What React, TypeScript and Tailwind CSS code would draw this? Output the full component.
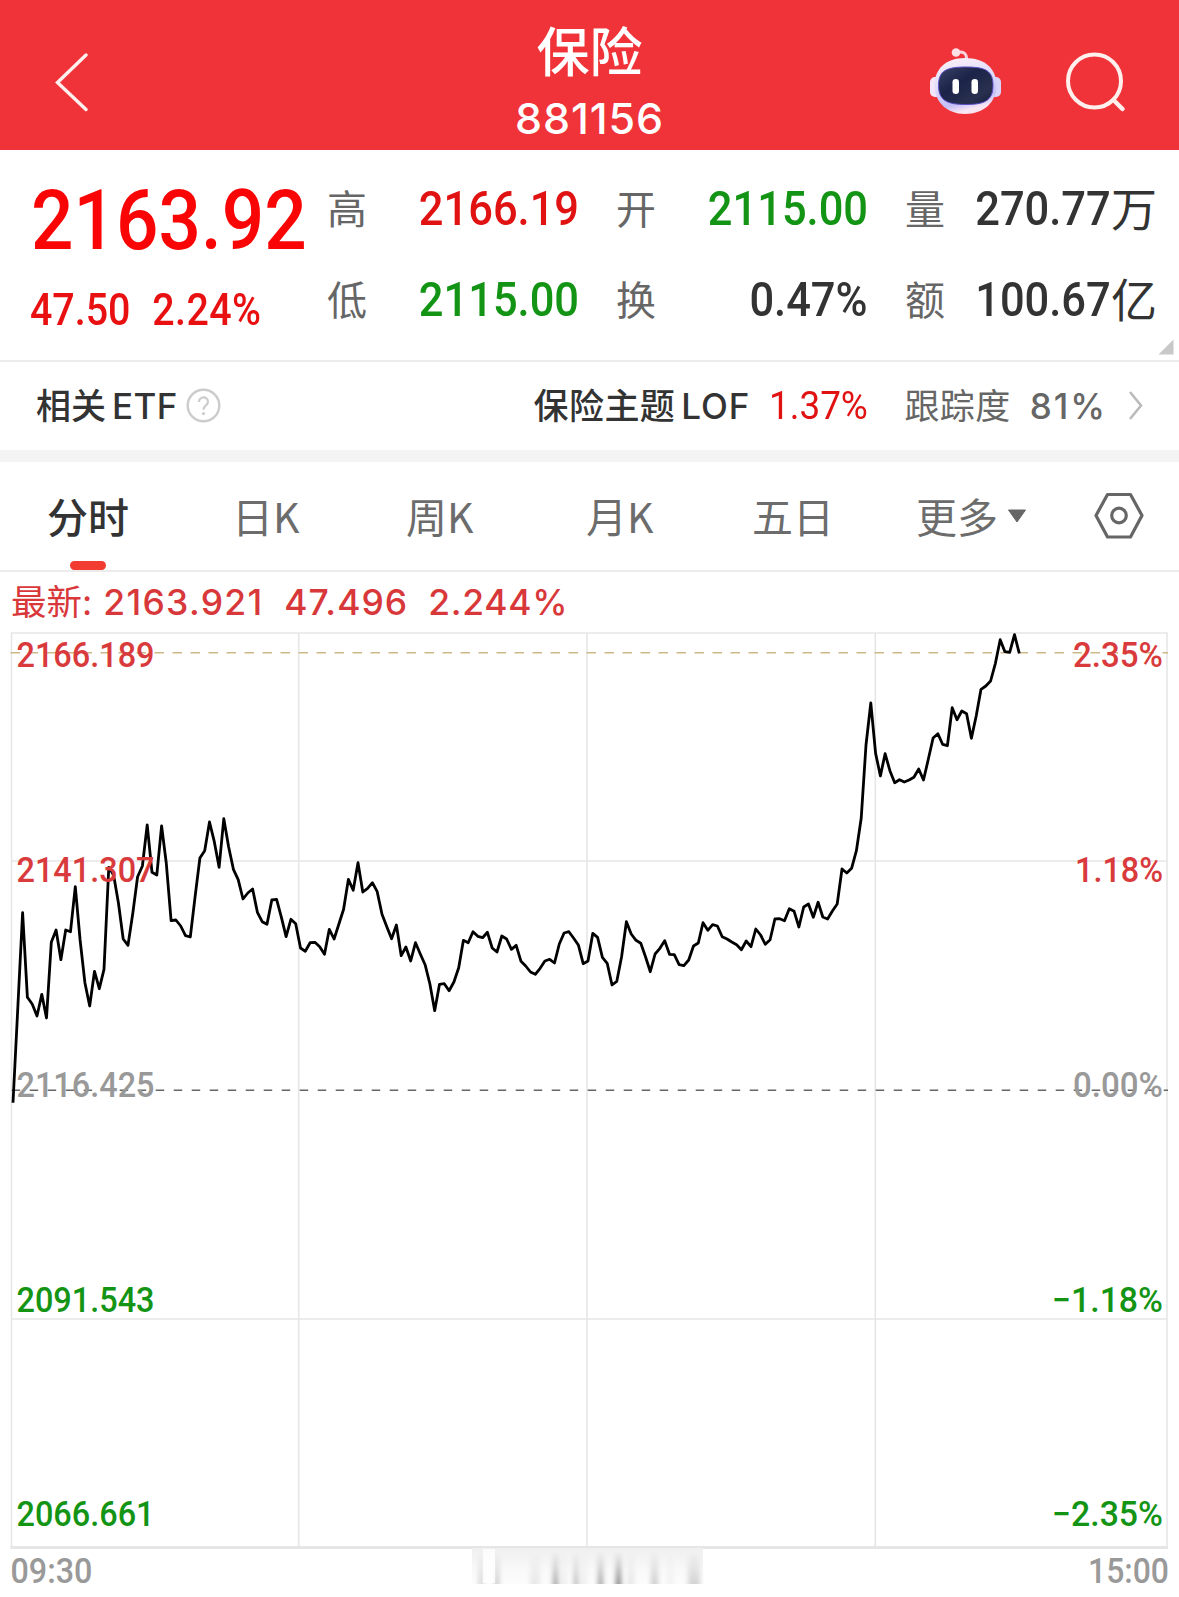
import clsx from "clsx";

const CJK = "font-['Inter','Noto_Sans_CJK_SC',sans-serif]";
const NUM = "font-['Roboto','Noto_Sans_CJK_SC',sans-serif]";

const stats = [
  { label: "高", value: "2166.19", color: "text-[#e01212]" },
  { label: "开", value: "2115.00", color: "text-[#149414]" },
  { label: "量", value: "270.77", unit: "万", color: "text-[#333]" },
  { label: "低", value: "2115.00", color: "text-[#149414]" },
  { label: "换", value: "0.47%", color: "text-[#333]" },
  { label: "额", value: "100.67", unit: "亿", color: "text-[#333]" },
];

const tabs = [
  { name: "分时", width: "w-[177px] pl-[47px]" },
  { name: "日K", width: "w-[175px] pl-[55px]" },
  { name: "周K", width: "w-[176px] pl-[54px]" },
  { name: "月K", width: "w-[176px] pl-[58px]" },
  { name: "五日", width: "w-[174px] pl-[48px]" },
];

// 分时线，每分钟一个点
const prices = [
  1102.7, 1008, 912.7, 997.3, 1004, 1016, 994.3, 1018, 942.3, 930, 959.7, 930,
  931.7, 886.7, 940, 982.7, 1006, 971.3, 988.7, 969.3, 867.3, 875, 902.7, 939,
  945.3, 913.3, 876.7, 866, 825, 872.3, 875, 826, 863.3, 920.7, 920, 926,
  935.7, 937, 896.7, 858, 850.7, 822, 841.7, 867.3, 818.7, 846.7, 869.3, 879.7,
  899, 893, 889, 912.3, 921.7, 924.3, 900, 899.3, 917.3, 936.7, 919.3, 923.7,
  948, 951.3, 942.7, 942.3, 946.7, 954.3, 929.3, 939, 924, 909.3, 879.3, 890.3,
  862.7, 892, 888.3, 882.7, 891.7, 914.3, 926.7, 938.7, 925, 955.7, 947, 961,
  942.7, 954, 964.7, 984, 1010.7, 984.3, 983.7, 990.7, 982, 967.7, 940.3, 942.7,
  931.7, 936.3, 937.7, 932.3, 948, 952, 936, 939, 949.3, 945.3, 961.3, 966,
  972, 974.3, 968.3, 961, 959.3, 963, 944, 933, 931.7, 938.3, 945.3, 963.7,
  961, 933.3, 937.3, 957.3, 963.3, 985, 981.3, 956.7, 921.7, 934, 940.3, 943.3,
  956.7, 971.7, 954, 948.3, 940.7, 954.3, 954.7, 964.7, 965.7, 960, 946, 943,
  922.7, 930.3, 924.7, 926, 936.7, 939, 942, 944.7, 949.7, 941, 946.7, 929,
  935, 944.3, 939.7, 919, 918.7, 920.7, 908.7, 911.3, 927, 907, 904, 917.3,
  902.3, 917, 919, 911, 904, 869, 873, 868.3, 850.7, 818.3, 745, 703,
  753.3, 776, 753.7, 770.7, 782.7, 779.7, 782, 780, 777.3, 769, 780, 759.3,
  738, 733.7, 744.3, 745.7, 707.7, 719.7, 711, 713.7, 738.3, 716, 689.3, 686,
  681, 663.3, 639.7, 651.7, 652.3, 634.7, 653.3,
];

const axis = [
  { y: 666.5, left: "2166.189", right: "2.35%", rw: 90, fill: "#d93a3c" },
  { y: 881.5, left: "2141.307", right: "1.18%", rw: 88, fill: "#d93a3c" },
  { y: 1096.5, left: "2116.425", right: "0.00%", rw: 90, fill: "#999" },
  { y: 1311.5, left: "2091.543", right: "−1.18%", rw: 111, fill: "#149414" },
  { y: 1526, left: "2066.661", right: "−2.35%", rw: 111, fill: "#149414" },
];

// 底部残影的竖条: x, 宽, 深浅
const smears = [
  [479, 4, 0.25], [495, 4, 0.32], [530, 10, 0.1], [553, 5, 0.5],
  [562, 4, 0.1], [574, 4, 0.4], [582, 4, 0.1], [598, 5, 0.5],
  [616, 5, 0.7], [628, 6, 0.12], [651, 7, 0.25], [668, 5, 0.06],
  [688, 12, 0.22],
];

function Robot() {
  return (
    <svg width="74" height="68" viewBox="0 0 74 68">
      <defs>
        <linearGradient id="shell" x1="0" y1="0" x2="0.3" y2="1">
          <stop offset="0" stopColor="#fff4f8" />
          <stop offset="0.55" stopColor="#dcd8fb" />
          <stop offset="0.85" stopColor="#c3bdf8" />
          <stop offset="1" stopColor="#f8e6f2" />
        </linearGradient>
        <linearGradient id="visor" x1="0" y1="0" x2="1" y2="1">
          <stop offset="0" stopColor="#3a4166" />
          <stop offset="0.4" stopColor="#1b2448" />
          <stop offset="0.75" stopColor="#29304f" />
          <stop offset="1" stopColor="#161c3c" />
        </linearGradient>
      </defs>
      <path d="M27 5.5C34 4 38 6 37.5 13" fill="none" stroke="#fbd3dc" strokeWidth="3" />
      <circle cx="27" cy="5.5" r="4.3" fill="#fde0e6" />
      <rect x="1" y="30" width="12" height="20" rx="5" fill="#f3e6fa" />
      <rect x="60" y="30" width="12" height="20" rx="5" fill="#d9d3fa" />
      <path d="M36 11C56 11 67.5 22 67.5 38C67.5 55 55 67 36 67C18 67 5.5 55 5.5 38C5.5 22 17 11 36 11Z" fill="url(#shell)" />
      <path d="M37 20C57 20 64 24 64 38.5C64 54 55 57.5 37 57.5C19 57.5 9.5 54 9.5 38.5C9.5 24 17 20 37 20Z" fill="url(#visor)" stroke="#5a4fc4" strokeWidth="1" />
      <rect x="23.5" y="32" width="6.5" height="15" rx="3.2" fill="#fff" />
      <rect x="42.5" y="32" width="6.5" height="15" rx="3.2" fill="#fff" />
    </svg>
  );
}

function Header() {
  return (
    <header className="flex h-[150px] items-start justify-between bg-[#f03239] text-white">
      <div className="w-[400px] pt-[53px] pl-[55px]">
        <svg width="36" height="60" viewBox="0 0 36 60" fill="none" stroke="#fff0ee" strokeWidth="3.4">
          <path d="M31 2L2.5 29.5L31 56.5" strokeLinecap="round" />
        </svg>
      </div>
      <div className="flex flex-col items-center">
        <div className="mt-[23px] text-[53px] leading-[60px] font-medium">保险</div>
        <div className="mt-[8px] text-[43px] leading-[54px] font-medium tracking-[0.9px]">881156</div>
      </div>
      <div className="flex w-[400px] justify-end gap-[61px] pr-[53px]">
        <div className="pt-[47px]">
          <Robot />
        </div>
        <svg className="mt-[51px]" width="62" height="64" viewBox="0 0 62 64" fill="none" stroke="#fff0ee" strokeWidth="4">
          <circle cx="30.5" cy="30" r="26.5" />
          <path d="M49.5 49L58.5 58" strokeWidth="4.5" strokeLinecap="round" />
        </svg>
      </div>
    </header>
  );
}

function Quote() {
  return (
    <section className="relative flex h-[212px] border-b-2 border-[#ececec]">
      <div className={clsx("w-[327px] whitespace-nowrap text-[#e81010]", NUM)}>
        <div className="mt-[29px] ml-[31px] origin-left scale-x-[0.89] text-[84px] leading-[84px] font-medium text-[#f90505]">
          2163.92
        </div>
        <div className="mt-[22px] ml-[30px] flex w-[270px] origin-left scale-x-[0.905] gap-[24px] text-[43.5px] leading-[52px] font-medium">
          <span>47.50</span>
          <span className="tracking-[0.5px]">2.24%</span>
        </div>
      </div>
      <div className="mt-[28px] grid h-[152px] w-[830px] grid-cols-[252px_37px_252px_37px_252px] grid-rows-[62px_62px] content-start gap-y-[29px]">
        {stats.map((s, i) => (
          <div
            key={i}
            className={clsx(
              "flex items-center justify-between",
              i % 3 === 0 && "col-start-1",
              i % 3 === 1 && "col-start-3",
              i % 3 === 2 && "col-start-5",
            )}
          >
            <span className="pt-[1px] text-[40px] text-[#666]">{s.label}</span>
            <span className={clsx("flex items-center whitespace-nowrap", s.color)}>
              <span className={clsx("origin-right scale-x-[0.905] text-[48px] leading-[60px] font-medium", NUM)}>
                {s.value}
              </span>
              {s.unit && <span className="text-[46px] leading-[60px]">{s.unit}</span>}
            </span>
          </div>
        ))}
      </div>
      <svg className="absolute right-[5px] bottom-[5px]" width="16" height="16" viewBox="0 0 16 16">
        <path d="M15.5 0.5V15.5H0.5Z" fill="#c8c8c8" />
      </svg>
    </section>
  );
}

function EtfRow() {
  return (
    <section className="flex h-[100px] items-center border-b-12 border-[#f4f4f4] pl-[36px] text-[35px] font-medium whitespace-nowrap text-[#333]">
      <span>相关</span>
      <span className="ml-[6px] tracking-[0.4px]">ETF</span>
      <svg className="ml-[7px]" width="36" height="36" viewBox="0 0 36 36" fill="none" stroke="#ccc">
        <circle cx="18.5" cy="17.5" r="15.8" strokeWidth="2.4" />
        <path d="M14 14C14 8 23 8 23 13.7C23 17.5 18.5 17.3 18.5 21.8" strokeWidth="2.2" />
        <circle cx="18.5" cy="25.5" r="1.6" fill="#ccc" stroke="none" />
      </svg>
      <div className="mr-[34px] ml-auto flex items-center">
        <span className="tracking-[0.4px]">保险主题</span>
        <span className="ml-[6px] tracking-[1px]">LOF</span>
        <span className={clsx("ml-[19px] w-[99px] origin-left scale-x-[0.945] text-[39px] font-normal text-[#e01212]", NUM)}>
          1.37%
        </span>
        <span className="ml-[36px] font-normal tracking-[0.4px] text-[#666]">跟踪度</span>
        <span className="ml-[19px] tracking-[2px] text-[#666]">81%</span>
        <svg className="ml-[20px]" width="18" height="32" viewBox="0 0 18 32" fill="none" stroke="#bbb" strokeWidth="2.6">
          <path d="M3 2L14 15.5L3 29" />
        </svg>
      </div>
    </section>
  );
}

function Tabs() {
  return (
    <nav className="flex h-[110px] items-center border-b-2 border-[#ececec] font-['Noto_Sans_CJK_SC',sans-serif] text-[41px] font-normal text-[#6c6c6c]">
      {tabs.map((t, i) => (
        <div key={t.name} className={clsx("relative h-full leading-[107px] whitespace-nowrap", t.width, i === 0 && "font-medium text-[#333]")}>
          {t.name}
          {i === 0 && <i className="absolute bottom-0 left-[70px] h-[9px] w-[36px] rounded-full bg-[#f23c32]" />}
        </div>
      ))}
      <div className="flex h-full items-center pb-[2px] pl-[38px] leading-[106px]">
        更多
        <svg className="mt-[2px] ml-[9px]" width="20" height="14" viewBox="0 0 20 14">
          <path d="M1.5 1H18.5L10 13Z" fill="#666" stroke="#666" strokeLinejoin="round" />
        </svg>
      </div>
      <svg className="mr-[33px] ml-auto" width="54" height="50" viewBox="0 0 54 50" fill="none" stroke="#666" strokeWidth="3.2">
        <path d="M15.5 3.5H38.5L50 24.5L38.5 46H15.5L4 24.5Z" strokeLinejoin="round" />
        <circle cx="27" cy="24.5" r="7.3" />
      </svg>
    </nav>
  );
}

function Chart() {
  const points = prices.map((y, i) => `${(13 + i * 4.792).toFixed(1)},${y}`).join(" ");
  return (
    <svg className="block" width="1179" height="965" viewBox="0 632 1179 965">
      <defs>
        <linearGradient id="smear" x1="0" y1="0" x2="0" y2="1">
          <stop offset="0.1" stopColor="#444" stopOpacity="0" />
          <stop offset="1" stopColor="#444" />
        </linearGradient>
        <linearGradient id="haze" x1="0" y1="0" x2="0" y2="1">
          <stop offset="0" stopColor="#efefef" />
          <stop offset="0.6" stopColor="#f9f9f9" />
          <stop offset="1" stopColor="#fcfcfc" />
        </linearGradient>
        <filter id="soft" x="-150%" width="400%" y="0" height="100%">
          <feGaussianBlur stdDeviation="2.4 0" />
        </filter>
      </defs>

      {/* 网格 */}
      <g stroke="#e6e6e6" strokeWidth="1.6" fill="none">
        <path d="M11.5 633H1167V1547H11.5Z" />
        <path d="M298.7 633V1547M587 633V1547M875.3 633V1547M11.5 861H1167M11.5 1319H1167" />
        <path d="M10.5 1547.5H1168" strokeWidth="3" />
      </g>
      <path d="M10.5 652.7H1168" stroke="#cdb987" strokeWidth="1.6" strokeDasharray="9.5 8.5" />
      <path d="M11.7 1090.3H1168" stroke="#666" strokeWidth="1.4" strokeDasharray="8.5 9.5" />

      <polyline points={points} fill="none" stroke="#000" strokeWidth="2.8" strokeLinejoin="round" />

      <g fontFamily="Roboto, sans-serif" fontSize="35" fontWeight="500">
        {axis.map((a) => (
          <g key={a.y} fill={a.fill}>
            <text x="16.5" y={a.y} textLength="138" lengthAdjust="spacingAndGlyphs">{a.left}</text>
            <text x={1163 - a.rw} y={a.y} textLength={a.rw} lengthAdjust="spacingAndGlyphs">{a.right}</text>
          </g>
        ))}
        <g fill="#999">
          <text x="10.5" y="1583" textLength="82" lengthAdjust="spacingAndGlyphs">09:30</text>
          <text x="1088" y="1583" textLength="81" lengthAdjust="spacingAndGlyphs">15:00</text>
        </g>
      </g>

      <rect x="472" y="1548" width="231" height="36" fill="url(#haze)" />
      {smears.map(([x, w, o]) => (
        <rect key={x} x={x} y="1548" width={w} height="36" fill="url(#smear)" opacity={o} filter="url(#soft)" />
      ))}
      <rect x="483" y="1549" width="12" height="34" fill="#fff" opacity="0.8" />
    </svg>
  );
}

export default function App() {
  return (
    <div className={clsx("h-[1597px] w-[1179px] overflow-hidden bg-white", CJK)}>
      <Header />
      <Quote />
      <EtfRow />
      <Tabs />
      <div className="flex h-[60px] items-center pt-[1px] pl-[11px] text-[35.5px] font-medium whitespace-nowrap text-[#d8383a]">
        <span className="font-normal">最新:</span>
        <span className="ml-[11px] w-[181px] tracking-[1.3px]">2163.921</span>
        <span className="w-[144px] tracking-[1px]">47.496</span>
        <span className="tracking-[0.7px]">2.244%</span>
      </div>
      <Chart />
    </div>
  );
}
